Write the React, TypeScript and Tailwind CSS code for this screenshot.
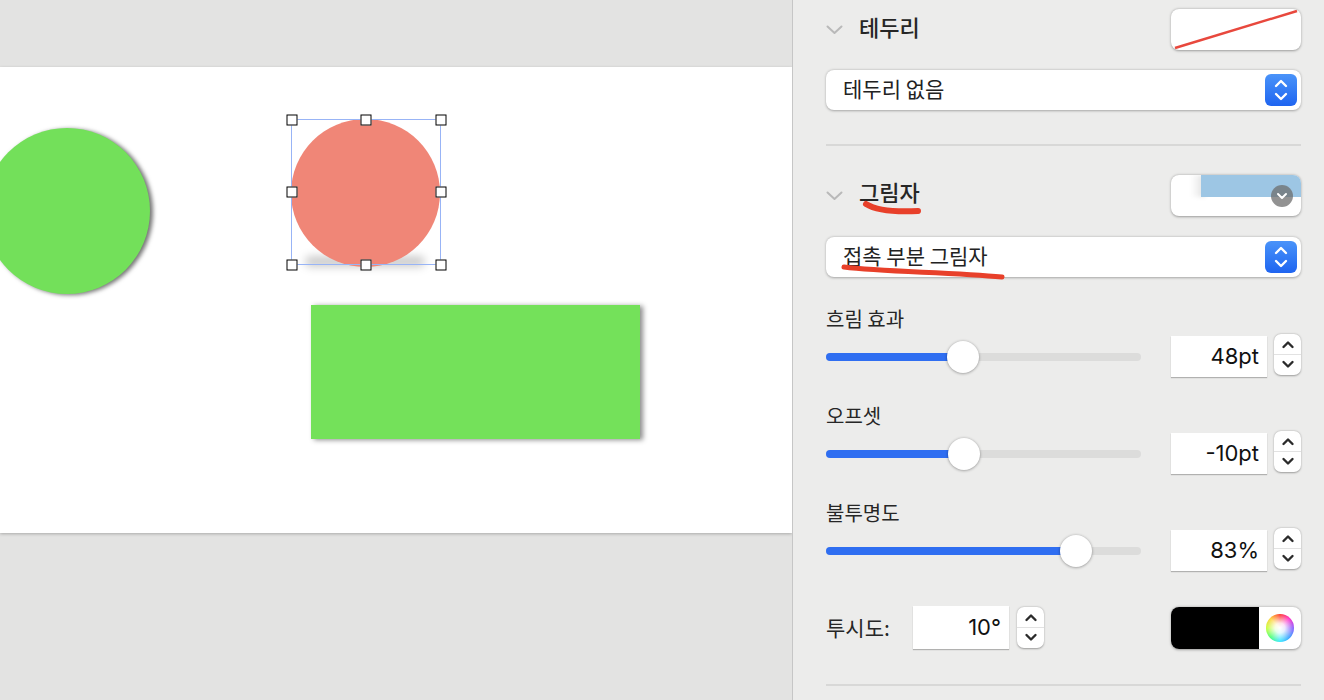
import React from 'react'

const KR = { fontFamily: '"Noto Sans CJK KR", "Noto Sans", sans-serif' }

function HeaderChevron() {
  return (
    <svg width="17" height="10" viewBox="0 0 17 10" className="shrink-0">
      <polyline points="1.5,1.5 8.5,8 15.5,1.5" fill="none" stroke="#b9b9b9" strokeWidth="2" strokeLinecap="round" strokeLinejoin="round" />
    </svg>
  )
}

function UpDown({ color = '#2b2b2b' }: { color?: string }) {
  return (
    <svg width="16" height="26" viewBox="0 0 16 26">
      <polyline points="3,9 8,4 13,9" fill="none" stroke={color} strokeWidth="2.4" strokeLinecap="round" strokeLinejoin="round" />
      <polyline points="3,17 8,22 13,17" fill="none" stroke={color} strokeWidth="2.4" strokeLinecap="round" strokeLinejoin="round" />
    </svg>
  )
}

function Stepper() {
  return (
    <div className="flex h-[41px] w-[27px] shrink-0 -translate-y-[2px] flex-col overflow-hidden rounded-[7px] bg-white shadow-[0_0.5px_2px_rgba(0,0,0,0.35)]">
      <div className="flex flex-1 items-center justify-center border-b border-[#e2e2e2] pt-[1px]">
        <svg width="14" height="9" viewBox="0 0 14 9">
          <polyline points="2.5,7 7,2.5 11.5,7" fill="none" stroke="#2b2b2b" strokeWidth="2.4" strokeLinecap="round" strokeLinejoin="round" />
        </svg>
      </div>
      <div className="flex flex-1 items-center justify-center pb-[1px]">
        <svg width="14" height="9" viewBox="0 0 14 9">
          <polyline points="2.5,2 7,6.5 11.5,2" fill="none" stroke="#2b2b2b" strokeWidth="2.4" strokeLinecap="round" strokeLinejoin="round" />
        </svg>
      </div>
    </div>
  )
}

function NumberBox({ value }: { value: string }) {
  return (
    <div
      className="flex h-[41px] w-[96px] shrink-0 items-center justify-end bg-white pr-[8px] text-[22px] text-[#111] shadow-[0_1px_1px_rgba(0,0,0,0.25)]"
      style={{ fontFamily: 'Inter, "Noto Sans", sans-serif' }}
    >
      {value}
    </div>
  )
}

function Select({ label }: { label: string }) {
  return (
    <div className="flex h-[40px] items-center justify-between rounded-[8px] bg-white pl-[17px] pr-[4px] shadow-[0_0.5px_2.5px_rgba(0,0,0,0.3)]">
      <span className="relative -top-[1px] text-[21px] text-[#222]">{label}</span>
      <div className="flex h-[32px] w-[32px] items-center justify-center rounded-[6px] bg-gradient-to-b from-[#4a93f9] to-[#1f64f0]">
        <UpDown color="#ffffff" />
      </div>
    </div>
  )
}

function SliderRow({ label, pct, value }: { label: string; pct: number; value: string }) {
  return (
    <div>
      <div className="text-[20px] leading-[24px] text-[#262626]">{label}</div>
      <div className="mt-[5px] flex h-[41px] items-center">
        <div className="relative h-[8px] w-[315px] rounded-full bg-[#dcdcdb]">
          <div className="h-full rounded-full bg-[#2f6ef1]" style={{ width: `${pct}%` }} />
          <div
            className="absolute top-1/2 h-[32px] w-[32px] -translate-x-1/2 -translate-y-1/2 rounded-full bg-white shadow-[0_0.5px_3px_rgba(0,0,0,0.4)]"
            style={{ left: `${pct}%` }}
          />
        </div>
        <div className="ml-[30px]">
          <NumberBox value={value} />
        </div>
        <div className="ml-[7px]">
          <Stepper />
        </div>
      </div>
    </div>
  )
}

function Handle({ x, y }: { x: number; y: number }) {
  return (
    <div
      className="absolute h-[11px] w-[11px] -translate-x-1/2 -translate-y-1/2 border-[1.5px] border-black bg-white"
      style={{ left: x, top: y }}
    />
  )
}

export default function App() {
  return (
    <div className="flex h-[700px] w-[1324px] overflow-hidden" style={KR}>
      {/* Canvas */}
      <div className="relative w-[793px] shrink-0 overflow-hidden border-r border-[#c6c6c6] bg-[#e3e3e2]">
        <div className="absolute left-0 right-0 top-[67px] h-[466px] bg-white shadow-[0_1px_3px_rgba(0,0,0,0.25)]">
          {/* green circle */}
          <div className="absolute left-[-16px] top-[61px] h-[166px] w-[166px] rounded-full bg-[#73e05a] shadow-[3px_1px_4px_rgba(0,0,0,0.55)]" />

          {/* contact shadow under red circle */}
          <div className="absolute left-[305px] top-[189px] h-[11px] w-[120px] rounded-full bg-[rgba(0,0,0,0.2)] blur-[4px]" />
          {/* red circle */}
          <div className="absolute left-[291px] top-[52px] h-[148px] w-[149px] rounded-full bg-[#f08677]" />
          {/* selection */}
          <div className="absolute left-[291px] top-[52px] h-[146px] w-[150px] border border-[#98b4f6]" />
          <Handle x={291.5} y={52.5} />
          <Handle x={366} y={52.5} />
          <Handle x={440.5} y={52.5} />
          <Handle x={291.5} y={124.5} />
          <Handle x={440.5} y={124.5} />
          <Handle x={291.5} y={197.5} />
          <Handle x={366} y={197.5} />
          <Handle x={440.5} y={197.5} />

          {/* green rectangle */}
          <div className="absolute left-[311px] top-[238px] h-[134px] w-[329px] bg-[#74e15a] shadow-[3px_1px_5px_rgba(0,0,0,0.45)]" />
        </div>
      </div>

      {/* Inspector */}
      <div className="relative flex-1 bg-[#ececeb] pl-[33px] pr-[23px] pt-[9px]">
        {/* 테두리 */}
        <div className="flex h-[41px] items-center justify-between">
          <div className="flex items-center gap-[16px]">
            <HeaderChevron />
            <span className="relative -top-[3px] text-[22px] font-medium text-[#262626]">테두리</span>
          </div>
          <div className="relative h-[41px] w-[130px] overflow-hidden rounded-[8px] bg-white shadow-[0_0.5px_2.5px_rgba(0,0,0,0.35)]">
            <svg width="130" height="41" viewBox="0 0 130 41" className="absolute inset-0">
              <line x1="4" y1="39" x2="126" y2="2" stroke="#e8483d" strokeWidth="2.4" />
            </svg>
          </div>
        </div>
        <div className="mt-[20px]">
          <Select label="테두리 없음" />
        </div>

        <div className="mt-[34px] h-[2px] bg-[#d8d8d7]" />

        {/* 그림자 */}
        <div className="mt-[29px] flex h-[41px] items-center justify-between">
          <div className="flex items-center gap-[16px]">
            <HeaderChevron />
            <span className="relative -top-[4px] text-[22px] font-medium text-[#262626]">그림자</span>
          </div>
          <div className="relative h-[41px] w-[130px] overflow-hidden rounded-[8px] bg-white shadow-[0_0.5px_2.5px_rgba(0,0,0,0.35)]">
            <div className="absolute left-[20px] top-0 h-[22px] w-[14px] bg-gradient-to-r from-transparent to-[rgba(0,0,0,0.12)] blur-[2px]" />
            <div className="absolute left-[30px] right-0 top-0 h-[22px] bg-[#9dc6e4]" />
            <div className="absolute left-[100px] top-[21px] flex h-[22px] w-[22px] -translate-y-1/2 items-center justify-center rounded-full bg-[rgba(110,110,110,0.75)]">
              <svg width="12" height="8" viewBox="0 0 12 8">
                <polyline points="2,2 6,6 10,2" fill="none" stroke="#fff" strokeWidth="2" strokeLinecap="round" strokeLinejoin="round" />
              </svg>
            </div>
          </div>
        </div>
        <div className="mt-[21px]">
          <Select label="접촉 부분 그림자" />
        </div>

        <div className="mt-[30px]">
          <SliderRow label="흐림 효과" pct={43.5} value="48pt" />
        </div>
        <div className="mt-[27px]">
          <SliderRow label="오프셋" pct={43.8} value="-10pt" />
        </div>
        <div className="mt-[27px]">
          <SliderRow label="불투명도" pct={79.4} value="83%" />
        </div>

        {/* 투시도 */}
        <div className="mt-[35px] flex h-[43px] items-center">
          <span className="w-[87px] text-[21px] text-[#262626]">투시도:</span>
          <div className="flex h-[43px] w-[96px] items-center justify-end bg-white pr-[8px] text-[22px] text-[#111] shadow-[0_1px_1px_rgba(0,0,0,0.25)]" style={{ fontFamily: 'Inter, "Noto Sans", sans-serif' }}>
            10°
          </div>
          <div className="ml-[8px] translate-y-[2px]">
            <Stepper />
          </div>
          <div className="ml-auto flex h-[42px] w-[130px] overflow-hidden rounded-[8px] bg-white shadow-[0_0.5px_2.5px_rgba(0,0,0,0.35)]">
            <div className="w-[88px] bg-black" />
            <div className="flex flex-1 items-center justify-center">
              <div
                className="h-[28px] w-[28px] rounded-full"
                style={{
                  background:
                    'radial-gradient(circle, #ffffff 0%, rgba(255,255,255,0.85) 25%, rgba(255,255,255,0) 70%), conic-gradient(#ff3b30, #ff2dc8, #8a5cff, #3aa0ff, #38e8ff, #4cff7a, #c8ff3c, #ffd23a, #ff3b30)',
                }}
              />
            </div>
          </div>
        </div>

        <div className="mt-[35px] h-[2px] bg-[#d8d8d7]" />

        {/* hand-drawn annotations */}
        <svg className="pointer-events-none absolute left-0 top-0" width="531" height="300" viewBox="0 0 531 300">
          <path d="M73 204 C 84 211, 105 212, 125 211" fill="none" stroke="#e8402a" strokeWidth="6" strokeLinecap="round" />
          <path d="M51 267 C 90 272, 160 272, 209 277" fill="none" stroke="#e8402a" strokeWidth="5" strokeLinecap="round" />
        </svg>
      </div>
    </div>
  )
}
